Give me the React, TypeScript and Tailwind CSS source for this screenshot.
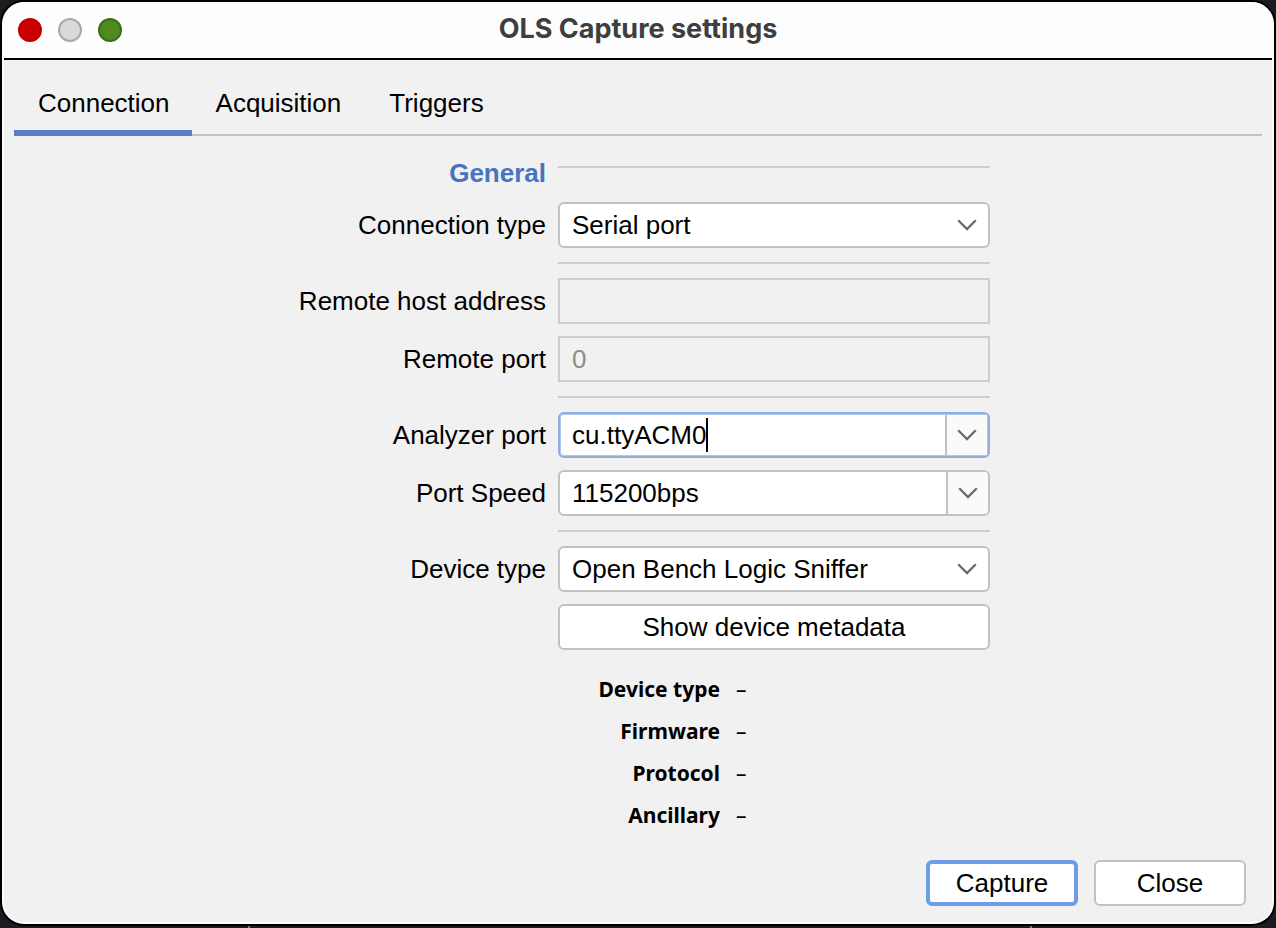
import { useState } from "react";
import type { ReactNode } from "react";

const fieldFrame = "h-[46px] w-full rounded-[6px] border-2 border-[#c2c2c2] bg-white";

function Chevron() {
  return (
    <svg width="20" height="12" viewBox="0 0 20 12" fill="none" stroke="#6a6a6a" strokeWidth="2.3" aria-hidden="true">
      <path d="M1.2 1.2 10 10 18.8 1.2" />
    </svg>
  );
}

function Row({ label, htmlFor, children }: { label: string; htmlFor: string; children: ReactNode }) {
  return (
    <>
      <label htmlFor={htmlFor} className="self-center text-right whitespace-nowrap">
        {label}
      </label>
      {children}
    </>
  );
}

function Separator() {
  return <hr className="col-start-2 my-0.5 border-0 border-t-2 border-[#cdcdcd]" />;
}

function SelectField({ id, options }: { id: string; options: string[] }) {
  return (
    <div className="relative">
      <select id={id} className={`${fieldFrame} appearance-none pl-3 pr-12 outline-none`}>
        {options.map((option) => (
          <option key={option}>{option}</option>
        ))}
      </select>
      <span className="pointer-events-none absolute inset-y-0 right-[13px] flex items-center">
        <Chevron />
      </span>
    </div>
  );
}

function ComboField({ id, initial, active = false }: { id: string; initial: string; active?: boolean }) {
  const [value, setValue] = useState(initial);
  return (
    <div
      className={
        active
          ? "flex h-[46px] w-full overflow-hidden rounded-[6px] border-2 border-[#93afd8] bg-white p-px ring-1 ring-inset ring-[#a9c9f5]"
          : "flex h-[46px] w-full overflow-hidden rounded-[6px] border-2 border-[#c2c2c2] bg-white pl-px"
      }
    >
      <div className="flex min-w-0 flex-1 items-center pl-[11px]">
        <input
          id={id}
          type="text"
          value={value}
          onChange={(event) => setValue(event.target.value)}
          className="min-w-0 bg-transparent caret-transparent outline-none [field-sizing:content]"
        />
        {active && <span className="h-[34px] w-0.5 shrink-0 bg-black" />}
      </div>
      <button
        type="button"
        aria-label="Show options"
        className="flex w-[42px] items-center justify-center border-l-2 border-[#c2c2c2] bg-[#fafafa]"
      >
        <Chevron />
      </button>
    </div>
  );
}

const tabs = ["Connection", "Acquisition", "Triggers"];
const metadata = ["Device type", "Firmware", "Protocol", "Ancillary"];

export default function App() {
  return (
    <div className="relative flex min-h-screen flex-col bg-[#1b1b20] px-0.5 pt-0.5 pb-1 font-['Liberation_Sans',Arial,sans-serif] text-[26px] leading-[30px] text-black">
      <span className="absolute bottom-0 left-[248px] h-1 w-0.5 bg-[#5f8a86]" />
      <span className="absolute bottom-0 left-[1030px] h-1 w-0.5 bg-[#5f8a86]" />
      <main className="relative flex flex-1 flex-col rounded-[22px] border-2 border-t-0 border-[#fdfdfd] bg-[#f1f1f1] ring-2 ring-black">
        <header className="grid h-[58px] grid-cols-[1fr_auto_1fr] items-center rounded-t-[20px] border-b-2 border-black bg-[#fdfdfd] px-3.5">
          <div className="flex gap-4">
            <button type="button" aria-label="Close window" className="size-6 rounded-full border-2 border-[#bd0000] bg-[#cc0000]" />
            <button type="button" aria-label="Minimize window" className="size-6 rounded-full border-2 border-[#a8a8a8] bg-[#d9d9d9]" />
            <button type="button" aria-label="Zoom window" className="size-6 rounded-full border-2 border-[#3c6e1a] bg-[#4e8a20]" />
          </div>
          <h1 className="pb-0.5 font-['Inter',sans-serif] text-[27px] font-bold text-[#3e3e3e]">OLS Capture settings</h1>
        </header>

        <div role="tablist" className="mx-2.5 mt-3 flex h-16 border-b-2 border-[#c2c2c2]">
          {tabs.map((tab, index) => (
            <button
              key={tab}
              type="button"
              role="tab"
              aria-selected={index === 0}
              className={
                index === 0
                  ? "-mb-0.5 border-b-6 border-[#5882c4] pr-[22px] pl-6 pt-1"
                  : "-mb-0.5 border-b-6 border-transparent px-6 pt-1"
              }
            >
              {tab}
            </button>
          ))}
        </div>

        <form className="flex flex-1 flex-col" onSubmit={(event) => event.preventDefault()}>
          <div className="mt-[22px] grid grid-cols-[260px_432px] justify-center gap-3">
            <h2 className="h-8 text-right font-bold text-[#4974bd]">General</h2>
            <hr className="mt-2 border-0 border-t-2 border-[#cdcdcd]" />

            <Row label="Connection type" htmlFor="connection-type">
              <SelectField id="connection-type" options={["Serial port", "Network"]} />
            </Row>
            <Separator />
            <Row label="Remote host address" htmlFor="remote-host">
              <input id="remote-host" type="text" disabled className="h-[46px] w-full border-2 border-[#cdcdcd] bg-transparent px-3 text-[#8c8c8c]" />
            </Row>
            <Row label="Remote port" htmlFor="remote-port">
              <input id="remote-port" type="text" disabled defaultValue="0" className="h-[46px] w-full border-2 border-[#cdcdcd] bg-transparent px-3 text-[#8c8c8c]" />
            </Row>
            <Separator />
            <Row label="Analyzer port" htmlFor="analyzer-port">
              <ComboField id="analyzer-port" initial="cu.ttyACM0" active />
            </Row>
            <Row label="Port Speed" htmlFor="port-speed">
              <ComboField id="port-speed" initial="115200bps" />
            </Row>
            <Separator />
            <Row label="Device type" htmlFor="device-type">
              <SelectField id="device-type" options={["Open Bench Logic Sniffer"]} />
            </Row>
            <button type="button" className={`${fieldFrame} col-start-2`}>
              Show device metadata
            </button>

            <dl className="col-start-2 mt-3 grid grid-cols-[162px_1fr] gap-x-4 gap-y-3 font-['Noto_Sans',sans-serif] text-[21px]">
              {metadata.map((name) => (
                <div key={name} className="contents">
                  <dt className="text-right font-bold">{name}</dt>
                  <dd>–</dd>
                </div>
              ))}
            </dl>
          </div>

          <footer className="mt-auto flex justify-end gap-4 px-[26px] pt-4 pb-4">
            <button type="submit" className="h-[46px] w-[152px] rounded-[6px] border-4 border-[#6c9de6] bg-white">
              Capture
            </button>
            <button type="button" className="h-[46px] w-[152px] rounded-[6px] border-2 border-[#c2c2c2] bg-white">
              Close
            </button>
          </footer>
        </form>
      </main>
    </div>
  );
}
